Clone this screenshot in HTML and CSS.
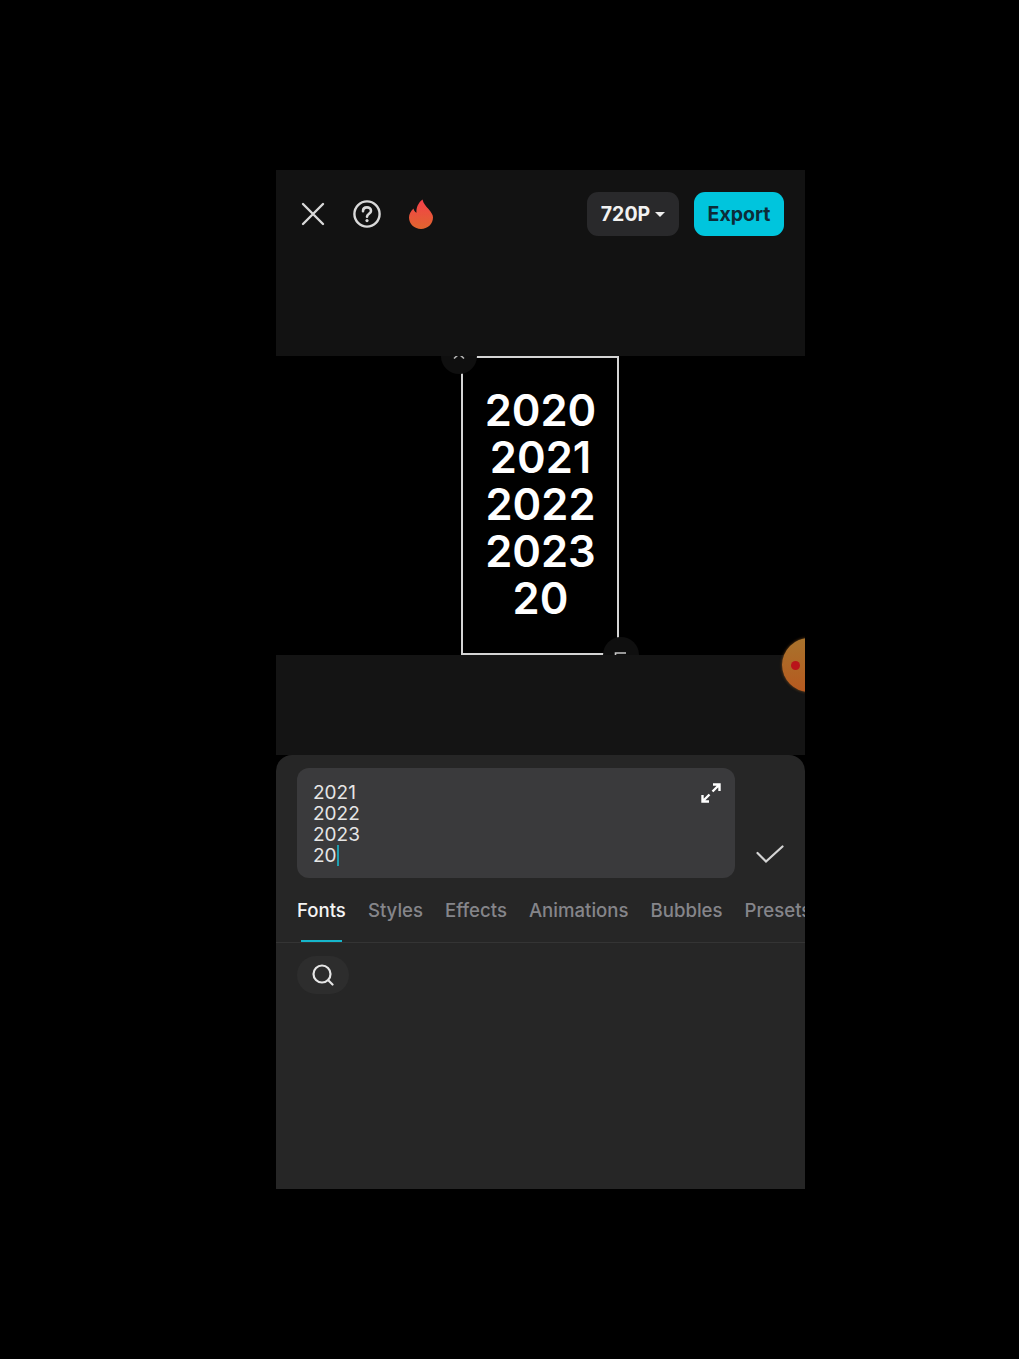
FILE: index.html
```html
<!DOCTYPE html>
<html lang="en">
<head>
  <meta charset="UTF-8">
  <meta name="viewport" content="width=device-width, initial-scale=1.0">
  <title>Text editor</title>
  <link rel="stylesheet" href="styles.css">
</head>
<body>
  <div class="phone">
    <div class="top-area">
      <div class="toolbar">
        <div class="tool-icons">
          <svg class="icon-close" viewBox="0 0 24 24" fill="none" stroke="#d9d9d9" stroke-width="2.4" stroke-linecap="round"><path d="M2 2 L22 22 M22 2 L2 22"/></svg>
          <svg class="icon-help" viewBox="0 0 28 28" fill="none" stroke="#d9d9d9" stroke-width="2.4" stroke-linecap="round"><circle cx="14" cy="14" r="12.6"/><path d="M10 11.2 C10 8.6 11.8 7.4 14 7.4 C16.2 7.4 18 8.8 18 10.9 C18 13.8 14 13.8 14 16.8" stroke-width="2.6"/><circle cx="14" cy="20.6" r="1.6" fill="#d9d9d9" stroke="none"/></svg>
          <svg class="icon-flame" viewBox="0 0 26 30">
            <defs>
              <linearGradient id="flame" x1="0" y1="0" x2="0" y2="1">
                <stop offset="0" stop-color="#f5404a"/>
                <stop offset="1" stop-color="#df652e"/>
              </linearGradient>
            </defs>
            <path fill="url(#flame)" d="M14.5 0.5 C15.5 5 18 7 20.5 10 C23.5 13.5 25 16 25 18.5 C25 25 19.5 30 13 30 C6.5 30 1 25 1 18.5 C1 15 2.8 12 5.5 9.5 C6 11.5 6.8 13 8.5 13.8 C8 8.5 10.5 3.5 14.5 0.5 Z"/>
          </svg>
        </div>
        <div class="tool-actions">
          <button class="quality">720P <span class="caret"></span></button>
          <button class="export">Export</button>
        </div>
      </div>
    </div>

    <div class="preview">
      <div class="text-frame">
        <div class="handle handle-top">
          <svg viewBox="0 0 14 8" fill="none" stroke="#b5b5b5" stroke-width="1.6"><path d="M2 6.5 L7 2 L12 6.5"/></svg>
        </div>
        <div class="frame-text">2020<br>2021<br>2022<br>2023<br>20</div>
        <div class="handle handle-bottom">
          <svg viewBox="0 0 14 14" fill="none" stroke="#c8c8c8" stroke-width="1.6"><path d="M1.5 13 V2 H12"/></svg>
        </div>
      </div>
    </div>

    <div class="gap-area">
      <div class="float-ball"><span class="float-dot"></span></div>
    </div>

    <div class="panel">
      <div class="input-row">
        <div class="input-box">
          <div class="input-text">2021<br>2022<br>2023<br>20<span class="cursor"></span></div>
          <svg class="icon-expand" viewBox="0 0 20 20" fill="none" stroke="#fff" stroke-width="2.4"><path d="M12 1.5 H18.5 V8 M18.5 1.5 L11.5 8.5 M8 18.5 H1.5 V12 M1.5 18.5 L8.5 11.5"/></svg>
        </div>
        <svg class="icon-check" viewBox="0 0 28 18" fill="none" stroke="#d4d4d4" stroke-width="2.2" stroke-linecap="round"><path d="M1.5 8 L10 16.5 L26.5 1.5"/></svg>
      </div>

      <div class="tabs">
        <span class="tab active">Fonts</span>
        <span class="tab">Styles</span>
        <span class="tab">Effects</span>
        <span class="tab">Animations</span>
        <span class="tab">Bubbles</span>
        <span class="tab">Presets</span>
      </div>

      <div class="search-row">
        <div class="search-pill">
          <svg viewBox="0 0 22 22" fill="none" stroke="#e6e6e6" stroke-width="2.2" stroke-linecap="round"><circle cx="10" cy="10" r="8.5"/><path d="M16.5 16.5 L20.5 20.5"/></svg>
        </div>
      </div>
    </div>
  </div>
</body>
</html>
```

FILE: styles.css
```css
html, body {
  margin: 0;
  padding: 0;
  background-color: #000;
}
body {
  font-family: Inter, "Liberation Sans", sans-serif;
  height: 1359px;
  padding-top: 170px;
  box-sizing: border-box;
  overflow: hidden;
}
.phone {
  position: relative;
  width: 529px;
  height: 1019px;
  margin-left: 276px;
  display: flex;
  flex-direction: column;
  overflow: hidden;
}

/* top bar */
.top-area {
  height: 186px;
  background-color: #121212;
  flex-shrink: 0;
  position: relative;
  z-index: 2;
}
.toolbar {
  display: flex;
  justify-content: space-between;
  align-items: center;
  padding: 22px 21px 0 25px;
}
.tool-icons {
  display: flex;
  align-items: center;
}
.icon-close {
  width: 24px;
  height: 24px;
}
.icon-help {
  width: 28px;
  height: 28px;
  margin-left: 28px;
}
.icon-flame {
  width: 26px;
  height: 30px;
  margin-left: 27px;
}
.tool-actions {
  display: flex;
  gap: 15px;
}
.quality, .export {
  height: 44px;
  border: none;
  border-radius: 11px;
  font-family: inherit;
  font-size: 19.5px;
  font-weight: 700;
  padding: 0;
}
.quality {
  width: 92px;
  background-color: #29292b;
  color: #f2f2f2;
  display: flex;
  align-items: center;
  justify-content: center;
  gap: 5px;
}
.caret {
  width: 0;
  height: 0;
  border-left: 5px solid transparent;
  border-right: 5px solid transparent;
  border-top: 5px solid #eee;
}
.export {
  width: 90px;
  background-color: #00c5dd;
  color: #0c2c38;
}

/* preview */
.preview {
  height: 299px;
  flex-shrink: 0;
  background-color: #000;
  display: flex;
  justify-content: center;
  overflow: hidden;
}
.text-frame {
  position: relative;
  width: 158px;
  height: 299px;
  margin-right: 1px;
  padding: 0 0 3px 1px;
  box-sizing: border-box;
  border: 2px solid #d4d4d4;
  display: flex;
  align-items: center;
  justify-content: center;
}
.frame-text {
  color: #fff;
  font-size: 43.5px;
  font-weight: 600;
  line-height: 47px;
  text-align: center;
}
.handle {
  position: absolute;
  width: 36px;
  height: 36px;
  border-radius: 50%;
  background-color: #0f0f0f;
  display: flex;
  align-items: center;
  justify-content: center;
}
.handle-top {
  left: -22px;
  top: -20px;
}
.handle-top svg {
  width: 14px;
  height: 8px;
  margin-top: 0;
}
.handle-bottom {
  right: -22px;
  bottom: -20px;
}
.handle-bottom svg {
  width: 14px;
  height: 14px;
  margin-top: 6px;
}

/* strip above the panel */
.gap-area {
  height: 100px;
  flex-shrink: 0;
  background-color: #141414;
}
.float-ball {
  position: absolute;
  left: 506px;
  top: 468px;
  width: 54px;
  height: 54px;
  border-radius: 50%;
  background: linear-gradient(180deg, #a8732c, #b6591f);
  box-shadow: 0 0 3px rgba(180, 110, 40, 0.6);
  z-index: 3;
}
.float-dot {
  position: absolute;
  left: 9px;
  top: 23px;
  width: 9px;
  height: 9px;
  border-radius: 50%;
  background-color: #b9141a;
}

/* bottom panel */
.panel {
  flex: 1;
  background-color: #262626;
  border-radius: 16px 16px 0 0;
}
.input-row {
  display: flex;
  align-items: flex-end;
  padding: 13px 21px 0;
}
.input-box {
  position: relative;
  width: 438px;
  height: 110px;
  box-sizing: border-box;
  padding: 14px 16px;
  background-color: #3a3a3c;
  border-radius: 12px;
}
.input-text {
  color: #e6e6e6;
  font-size: 19px;
  line-height: 21px;
}
.cursor {
  display: inline-block;
  width: 2px;
  height: 21px;
  vertical-align: -4px;
  background-color: #1f9fb0;
}
.icon-expand {
  position: absolute;
  top: 15px;
  right: 14px;
  width: 20px;
  height: 20px;
}
.icon-check {
  width: 28px;
  height: 18px;
  margin: 0 0 15px 21px;
}
.tabs {
  display: flex;
  gap: 22px;
  height: 65px;
  box-sizing: border-box;
  padding: 19px 0 0 21px;
  border-bottom: 1px solid #343434;
  white-space: nowrap;
  overflow: hidden;
  position: relative;
}
.tab {
  position: relative;
  height: 46px;
  color: #85858a;
  font-size: 18.6px;
  font-weight: 500;
  line-height: 26px;
}
.tab.active {
  color: #f4f4f4;
}
.tab.active::after {
  content: "";
  position: absolute;
  left: 4px;
  right: 4px;
  bottom: 0;
  height: 3px;
  background-color: #16b6cb;
}
.search-row {
  padding: 13px 21px 0;
}
.search-pill {
  width: 52px;
  height: 38px;
  border-radius: 19px;
  background-color: #2d2d2d;
  display: flex;
  align-items: center;
  justify-content: center;
}
.search-pill svg {
  width: 22px;
  height: 22px;
}
```
